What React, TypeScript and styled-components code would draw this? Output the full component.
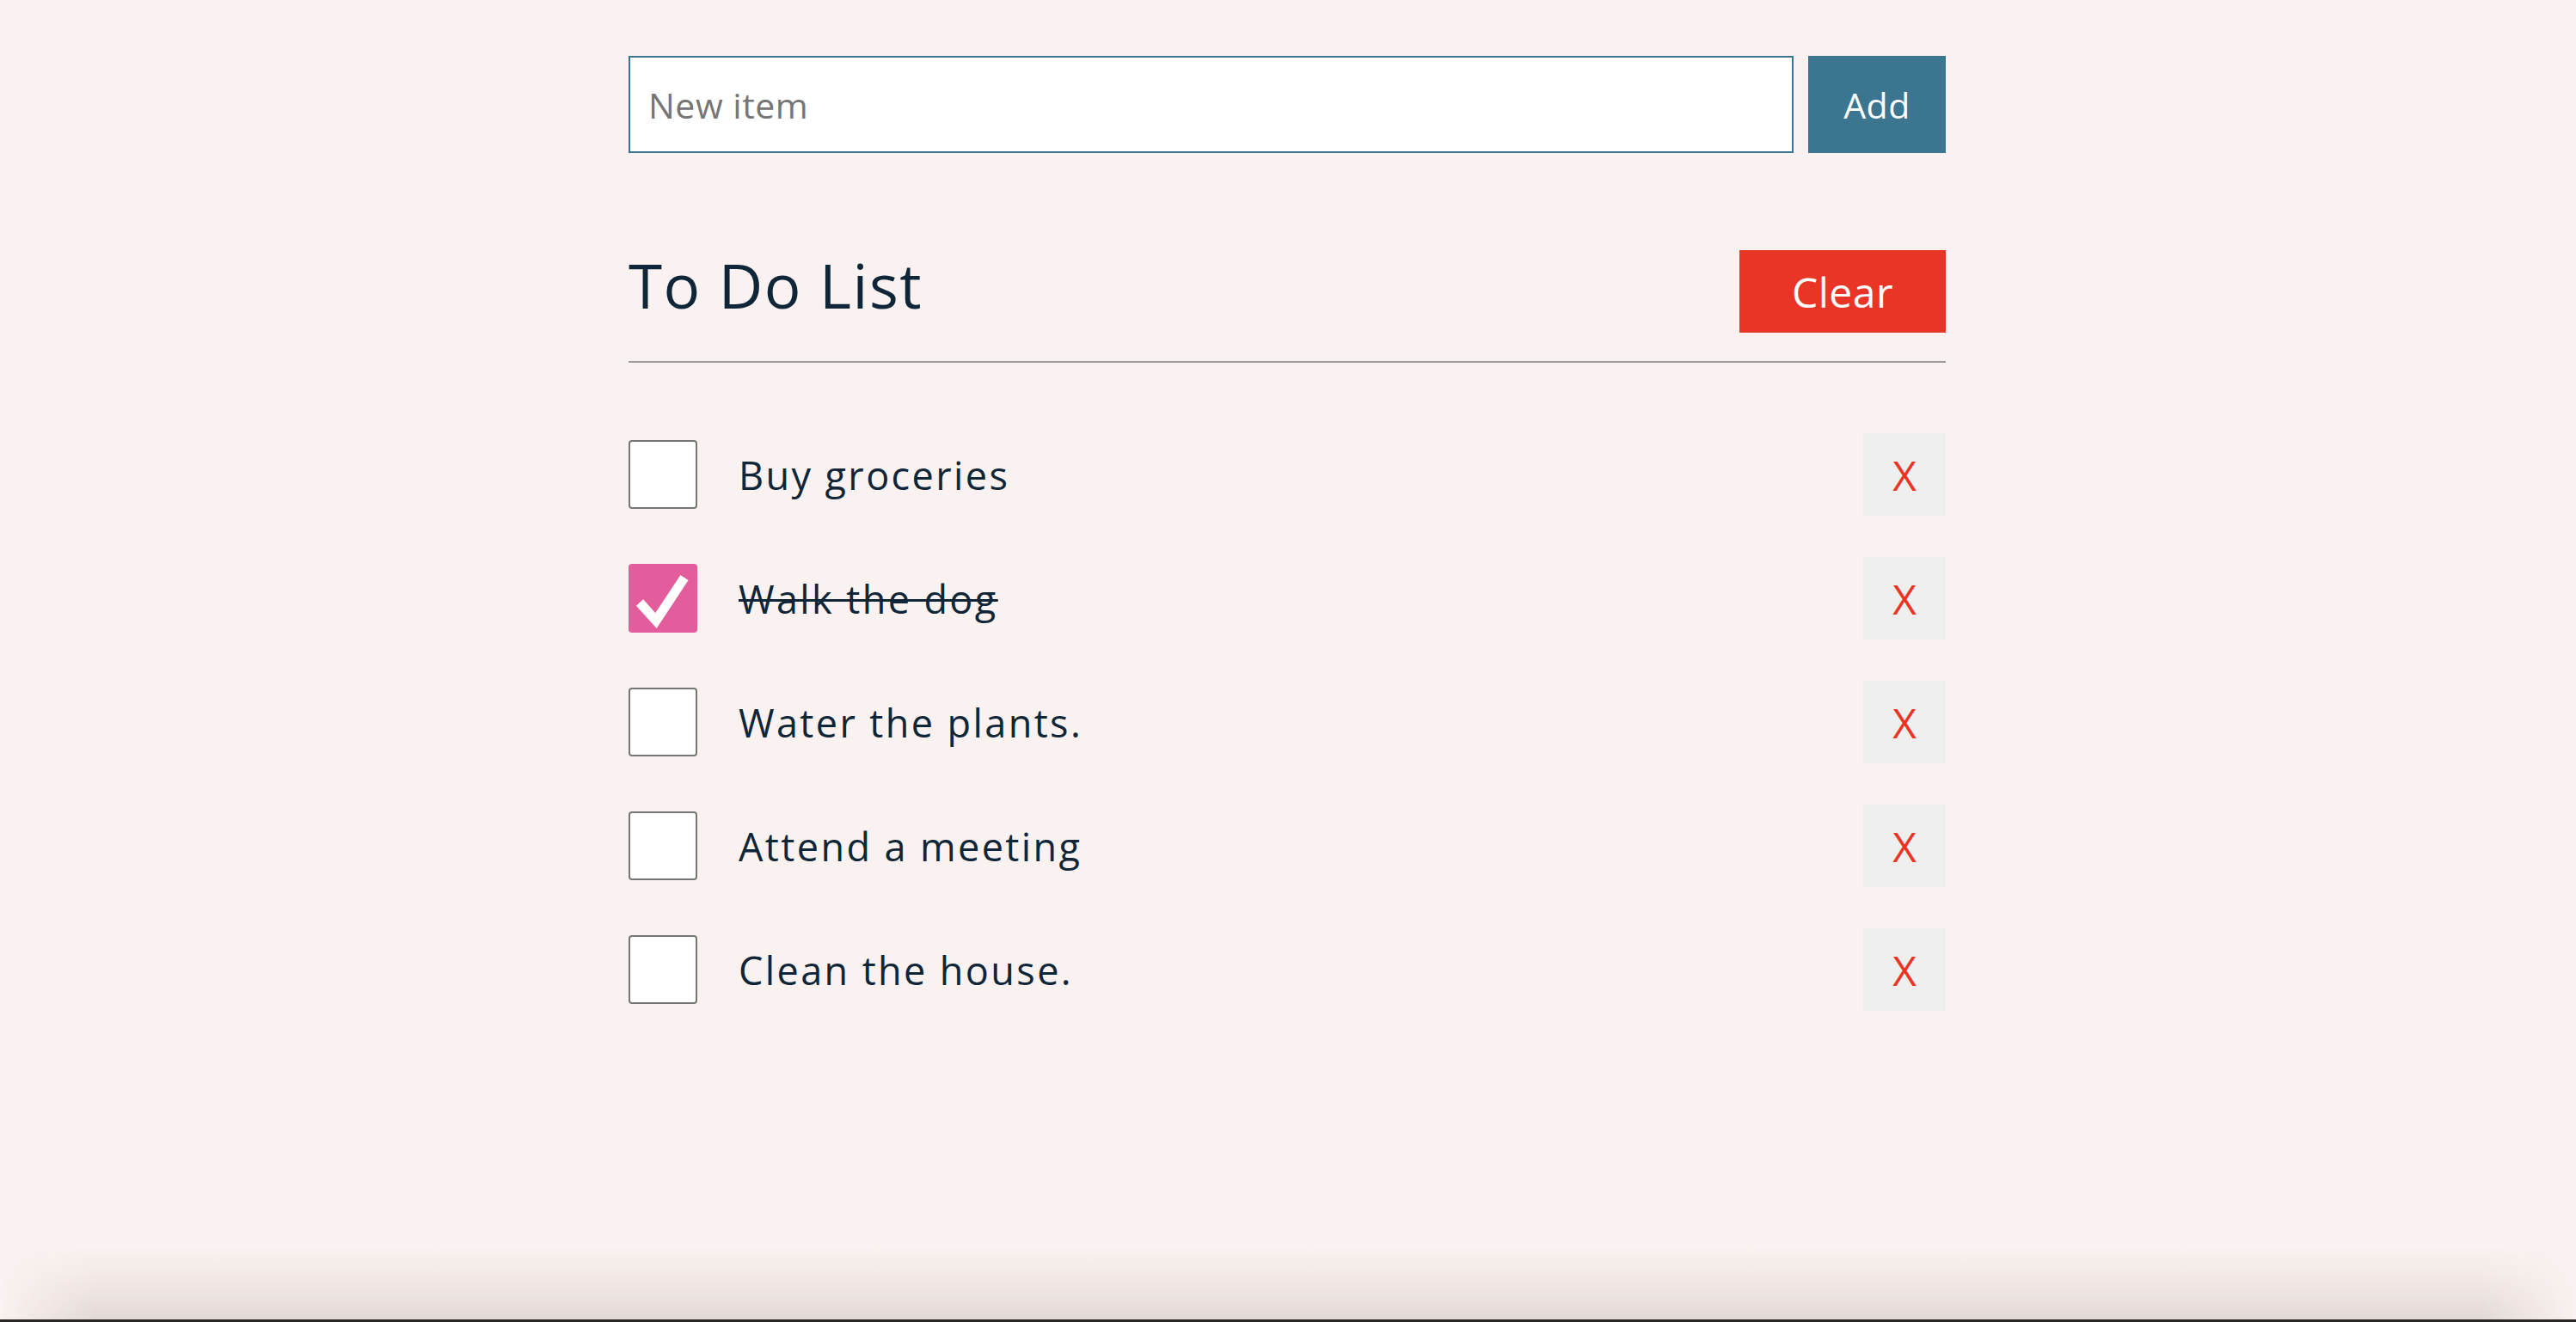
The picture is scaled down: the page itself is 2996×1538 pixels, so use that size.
import React, { useState } from "react";
import styled, { createGlobalStyle } from "styled-components";

const GlobalStyle = createGlobalStyle`
  html, body {
    margin: 0;
    padding: 0;
    background: #faf2f0;
  }
  * { box-sizing: border-box; }
`;

const Page = styled.div`
  min-height: 100vh;
  display: flex;
  flex-direction: column;
  background: #faf2f0;
  font-family: "Open Sans", "Noto Sans", sans-serif;
  color: #0f2538;
`;

const Main = styled.main`
  width: 1532px;
  margin: 0 auto;
  padding-top: 65px;
  flex: 1;
  position: relative;
  left: -1px;
`;

const Form = styled.form`
  display: flex;
  gap: 17px;
  height: 113px;
`;

const Input = styled.input`
  flex: 1;
  height: 100%;
  border: 2px solid #3b7590;
  background: #ffffff;
  padding: 0 21px;
  font-family: inherit;
  font-size: 41px;
  letter-spacing: 0.5px;
  color: #0f2538;
  outline: none;
  &::placeholder {
    color: #767676;
  }
`;

const AddButton = styled.button`
  width: 160px;
  height: 100%;
  border: none;
  background: #3b7590;
  color: #ffffff;
  font-family: inherit;
  font-size: 41px;
  letter-spacing: 0.5px;
  cursor: pointer;
`;

const Header = styled.header`
  margin-top: 113px;
  display: flex;
  align-items: center;
  justify-content: space-between;
  padding-bottom: 33px;
  border-bottom: 2px solid #9b9b9b;
`;

const Title = styled.h1`
  margin: 0 0 15px;
  font-size: 71px;
  font-weight: 400;
  line-height: 1;
  letter-spacing: 1.5px;
  color: #0f2538;
`;

const ClearButton = styled.button`
  width: 240px;
  height: 96px;
  border: none;
  background: #e93526;
  color: #ffffff;
  font-family: inherit;
  font-size: 48px;
  letter-spacing: 0.5px;
  cursor: pointer;
`;

const List = styled.ul`
  list-style: none;
  margin: 82px 0 0;
  padding: 0;
  display: flex;
  flex-direction: column;
  gap: 48px;
`;

const Row = styled.li`
  display: flex;
  align-items: center;
  height: 96px;
`;

const Box = styled.span<{ $checked: boolean }>`
  width: 80px;
  height: 80px;
  flex: none;
  border-radius: 4px;
  border: ${(p) => (p.$checked ? "none" : "2px solid #767676")};
  background: ${(p) => (p.$checked ? "#e35c9b" : "#ffffff")};
  display: flex;
  align-items: center;
  justify-content: center;
  cursor: pointer;
`;

const Label = styled.span<{ $done: boolean }>`
  margin-left: 48px;
  font-size: 45px;
  letter-spacing: 2.4px;
  color: #0f2538;
  text-decoration: ${(p) => (p.$done ? "line-through" : "none")};
  text-decoration-thickness: 3px;
`;

const DeleteButton = styled.button`
  margin-left: auto;
  width: 96px;
  height: 96px;
  border: none;
  background: #efefef;
  color: #e93526;
  font-family: inherit;
  font-size: 48px;
  cursor: pointer;
`;

const Footer = styled.footer`
  position: relative;
  height: 3px;
  background: #2a2624;
  &::before {
    content: "";
    position: absolute;
    left: 0;
    right: 0;
    bottom: 3px;
    height: 85px;
    background: linear-gradient(to bottom, rgba(70, 50, 45, 0), rgba(70, 50, 45, 0.04) 40%, rgba(70, 50, 45, 0.13));
    -webkit-mask-image: linear-gradient(to right, transparent 0, #000 110px, #000 calc(100% - 110px), transparent 100%);
    mask-image: linear-gradient(to right, transparent 0, #000 110px, #000 calc(100% - 110px), transparent 100%);
    pointer-events: none;
  }
`;

const Check = () => (
  <svg width="80" height="80" viewBox="0 0 80 80">
    <polyline
      points="13,45 32,66 65,16"
      fill="none"
      stroke="#ffffff"
      strokeWidth="11"
      strokeLinecap="butt"
      strokeLinejoin="miter"
    />
  </svg>
);

const initial = [
  { text: "Buy groceries", done: false },
  { text: "Walk the dog", done: true },
  { text: "Water the plants.", done: false },
  { text: "Attend a meeting", done: false },
  { text: "Clean the house.", done: false },
];

export default function App() {
  const [items, setItems] = useState(initial);
  const [value, setValue] = useState("");

  return (
    <Page>
      <GlobalStyle />
      <Main>
        <Form
          onSubmit={(e) => {
            e.preventDefault();
            if (value.trim()) {
              setItems([...items, { text: value.trim(), done: false }]);
              setValue("");
            }
          }}
        >
          <Input
            placeholder="New item"
            value={value}
            onChange={(e) => setValue(e.target.value)}
          />
          <AddButton type="submit">Add</AddButton>
        </Form>
        <Header>
          <Title>To Do List</Title>
          <ClearButton onClick={() => setItems([])}>Clear</ClearButton>
        </Header>
        <List>
          {items.map((item, i) => (
            <Row key={i}>
              <Box
                $checked={item.done}
                onClick={() =>
                  setItems(items.map((it, j) => (j === i ? { ...it, done: !it.done } : it)))
                }
              >
                {item.done && <Check />}
              </Box>
              <Label $done={item.done}>{item.text}</Label>
              <DeleteButton onClick={() => setItems(items.filter((_, j) => j !== i))}>
                X
              </DeleteButton>
            </Row>
          ))}
        </List>
      </Main>
      <Footer />
    </Page>
  );
}
